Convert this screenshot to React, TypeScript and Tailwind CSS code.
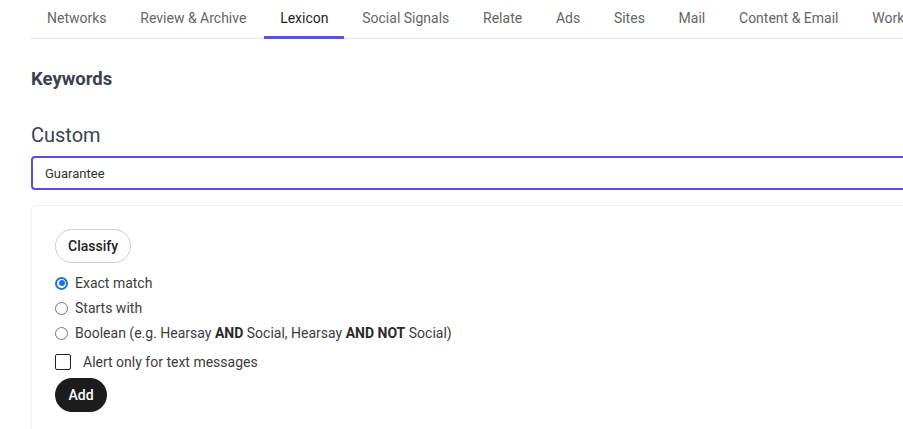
const tabs = [
  "Networks",
  "Review & Archive",
  "Lexicon",
  "Social Signals",
  "Relate",
  "Ads",
  "Sites",
  "Mail",
  "Content & Email",
  "Workflows",
];

const options = [
  { label: "Exact match", checked: true },
  { label: "Starts with", checked: false },
];

const Radio = ({ checked }: { checked: boolean }) => (
  <span
    className={
      checked
        ? "w-[13px] h-[13px] rounded-full border-2 border-[#1a73e8] flex items-center justify-center shrink-0"
        : "w-[13px] h-[13px] rounded-full border border-[#767676] shrink-0"
    }
  >
    {checked && <span className="w-[6px] h-[6px] rounded-full bg-[#1a73e8]" />}
  </span>
);

export default function App() {
  return (
    <div className="w-full h-[429px] overflow-hidden bg-white font-['Roboto',sans-serif] text-[#3c4043]">
      <div className="w-[1150px] pl-[31px]">
        <div className="border-b border-[#e6e6e6] h-[39px]">
          <nav className="flex h-[39px] -ml-[0.875px]">
            {tabs.map((tab) => (
              <div
                key={tab}
                className={
                  tab === "Lexicon"
                    ? "px-[16px] mx-[0.875px] pt-[8px] text-[14px] text-[#1f1f1f] border-b-[3px] border-[#5353ec]"
                    : "px-[16px] mx-[0.875px] pt-[8px] text-[14px] text-[#666]"
                }
              >
                {tab}
              </div>
            ))}
          </nav>
        </div>

        <h2 className="mt-[28px] text-[18.5px] font-bold text-[#3a4250] leading-[24px]">Keywords</h2>

        <h3 className="mt-[31px] text-[20px] text-[#3a4250] leading-[26px]">Custom</h3>
        <input
          defaultValue="Guarantee"
          className="mt-[8px] w-full h-[34px] border-2 border-[#5150e6] rounded-[4px] px-[12px] text-[13px] text-[#333] outline-none"
        />

        <div className="mt-[15px] border border-[#f0f0f0] rounded-[4px] shadow-[0_1px_2px_rgba(0,0,0,0.04)] pl-[23px] pt-[23px] pb-[20px] h-[240px]">
          <button className="h-[34px] px-[12px] rounded-full border border-[#cfcfcf] text-[14px] font-medium text-[#222]">
            Classify
          </button>

          <div className="mt-[11px] flex flex-col gap-[7px] text-[14px] text-[#3d3d3d]">
            {options.map((o) => (
              <label key={o.label} className="flex items-center gap-[7px] h-[18px]">
                <Radio checked={o.checked} />
                {o.label}
              </label>
            ))}
            <label className="flex items-center gap-[7px] h-[18px]">
              <Radio checked={false} />
              <span>
                Boolean (e.g. Hearsay <b className="text-[#2a2a2a]">AND</b> Social, Hearsay{" "}
                <b className="text-[#2a2a2a]">AND NOT</b> Social)
              </span>
            </label>
          </div>

          <label className="mt-[11px] flex items-center gap-[12px] text-[14px] text-[#3d3d3d] h-[18px]">
            <span className="w-[16px] h-[16px] border-[1.5px] border-[#222] rounded-[2px] shrink-0" />
            Alert only for text messages
          </label>

          <button className="mt-[7px] h-[34px] px-[13.5px] rounded-full bg-[#1c1c1c] text-white text-[14px] font-medium">
            Add
          </button>
        </div>
      </div>
    </div>
  );
}
